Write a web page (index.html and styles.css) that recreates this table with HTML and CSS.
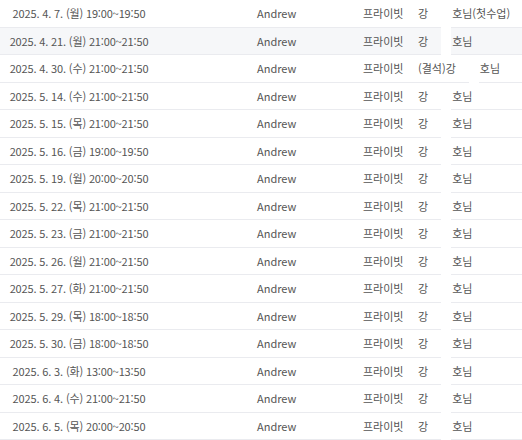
FILE: index.html
```html
<!DOCTYPE html>
<html lang="ko">
<head>
    <meta charset="UTF-8">
    <meta name="viewport" content="width=device-width, initial-scale=1.0">
    <title>수업 내역</title>
    <link rel="stylesheet" href="styles.css">
</head>
<body>
    <div class="lessons">
        <div class="row"><span class="date">2025. 4. 7. (월) 19:00~19:50</span><span class="teacher">Andrew</span><span class="type">프라이빗</span><span class="student">강<i class="gap"></i>호님(첫수업)</span></div>
        <div class="row active"><span class="date">2025. 4. 21. (월) 21:00~21:50</span><span class="teacher">Andrew</span><span class="type">프라이빗</span><span class="student">강<i class="gap"></i>호님</span></div>
        <div class="row"><span class="date">2025. 4. 30. (수) 21:00~21:50</span><span class="teacher">Andrew</span><span class="type">프라이빗</span><span class="student">(결석)강<i class="gap"></i>호님</span></div>
        <div class="row"><span class="date">2025. 5. 14. (수) 21:00~21:50</span><span class="teacher">Andrew</span><span class="type">프라이빗</span><span class="student">강<i class="gap"></i>호님</span></div>
        <div class="row"><span class="date">2025. 5. 15. (목) 21:00~21:50</span><span class="teacher">Andrew</span><span class="type">프라이빗</span><span class="student">강<i class="gap"></i>호님</span></div>
        <div class="row"><span class="date">2025. 5. 16. (금) 19:00~19:50</span><span class="teacher">Andrew</span><span class="type">프라이빗</span><span class="student">강<i class="gap"></i>호님</span></div>
        <div class="row"><span class="date">2025. 5. 19. (월) 20:00~20:50</span><span class="teacher">Andrew</span><span class="type">프라이빗</span><span class="student">강<i class="gap"></i>호님</span></div>
        <div class="row"><span class="date">2025. 5. 22. (목) 21:00~21:50</span><span class="teacher">Andrew</span><span class="type">프라이빗</span><span class="student">강<i class="gap"></i>호님</span></div>
        <div class="row"><span class="date">2025. 5. 23. (금) 21:00~21:50</span><span class="teacher">Andrew</span><span class="type">프라이빗</span><span class="student">강<i class="gap"></i>호님</span></div>
        <div class="row"><span class="date">2025. 5. 26. (월) 21:00~21:50</span><span class="teacher">Andrew</span><span class="type">프라이빗</span><span class="student">강<i class="gap"></i>호님</span></div>
        <div class="row"><span class="date">2025. 5. 27. (화) 21:00~21:50</span><span class="teacher">Andrew</span><span class="type">프라이빗</span><span class="student">강<i class="gap"></i>호님</span></div>
        <div class="row"><span class="date">2025. 5. 29. (목) 18:00~18:50</span><span class="teacher">Andrew</span><span class="type">프라이빗</span><span class="student">강<i class="gap"></i>호님</span></div>
        <div class="row"><span class="date">2025. 5. 30. (금) 18:00~18:50</span><span class="teacher">Andrew</span><span class="type">프라이빗</span><span class="student">강<i class="gap"></i>호님</span></div>
        <div class="row"><span class="date">2025. 6. 3. (화) 13:00~13:50</span><span class="teacher">Andrew</span><span class="type">프라이빗</span><span class="student">강<i class="gap"></i>호님</span></div>
        <div class="row"><span class="date">2025. 6. 4. (수) 21:00~21:50</span><span class="teacher">Andrew</span><span class="type">프라이빗</span><span class="student">강<i class="gap"></i>호님</span></div>
        <div class="row"><span class="date">2025. 6. 5. (목) 20:00~20:50</span><span class="teacher">Andrew</span><span class="type">프라이빗</span><span class="student">강<i class="gap"></i>호님</span></div>
    </div>
</body>
</html>
```

FILE: styles.css
```css
body {
    margin: 0;
    background: #fff;
    font-family: "Noto Sans CJK KR", "Noto Sans", sans-serif;
    font-size: 11px;
    color: #555;
}
.lessons {
    width: 522px;
}
.row {
    display: grid;
    grid-template-columns: 158px 205px 55px 1fr;
    align-items: center;
    height: 27.5px;
    box-sizing: border-box;
    border-bottom: 1px solid #eaebef;
    white-space: nowrap;
}
.row.active {
    background-color: #f6f7f9;
}
.date {
    text-align: center;
    letter-spacing: -0.15px;
}
.teacher {
    padding-left: 99px;
}
.student {
    display: flex;
    align-items: center;
    align-self: stretch;
}
.gap {
    position: relative;
    align-self: stretch;
    width: 24px;
}
/* hidden name cover */
.gap::after {
    content: "";
    position: absolute;
    top: 0;
    bottom: -1px;
    left: 13px;
    width: 10px;
    background: #fff;
}
```
